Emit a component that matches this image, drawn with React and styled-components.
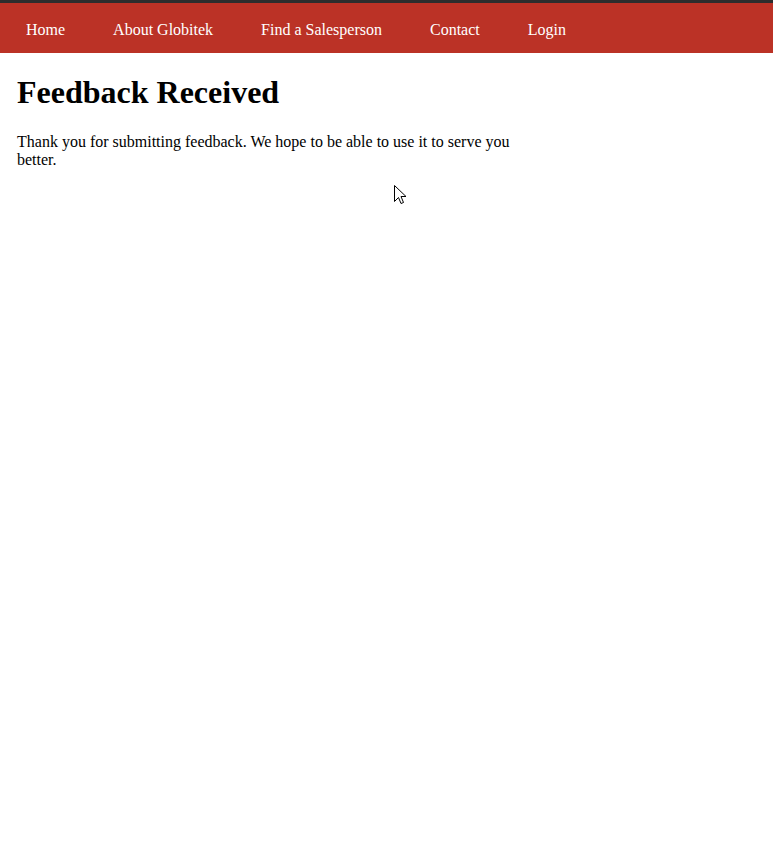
import React from "react";
import styled, { createGlobalStyle } from "styled-components";

const Global = createGlobalStyle`
  html, body { margin: 0; padding: 0; background: #ffffff; }
  body { font-family: "Liberation Serif", "Times New Roman", serif; font-size: 16px; color: #000; }
`;

const Page = styled.div`
  position: relative;
  min-height: 857px;
`;

const TopBar = styled.div`
  height: 3px;
  background: #2d2d2d;
`;

const Nav = styled.nav`
  background: #bb3226;
`;

const NavList = styled.ul`
  display: flex;
  margin: 0;
  padding: 0 0 0 2px;
  list-style: none;
`;

const NavItem = styled.li`
  display: block;
`;

const NavLink = styled.a`
  display: block;
  padding: 18px 24px 14px;
  color: #ffffff;
  text-decoration: none;
  font-size: 16px;
  line-height: 18px;
  white-space: nowrap;
`;

const Main = styled.main`
  padding: 0 17px;
  max-width: 510px;
`;

const Title = styled.h1`
  font-size: 32px;
  font-weight: bold;
  margin: 21.44px 0;
`;

const Text = styled.p`
  margin: 16px 0;
  font-size: 16px;
`;

const Cursor = styled.svg`
  position: absolute;
  left: 394px;
  top: 185px;
  pointer-events: none;
`;

const links = ["Home", "About Globitek", "Find a Salesperson", "Contact", "Login"];

export default function App() {
  return (
    <Page>
      <Global />
      <TopBar />
      <Nav>
        <NavList>
          {links.map((l) => (
            <NavItem key={l}>
              <NavLink href="#">{l}</NavLink>
            </NavItem>
          ))}
        </NavList>
      </Nav>
      <Main>
        <Title>Feedback Received</Title>
        <Text>
          Thank you for submitting feedback. We hope to be able to use it to serve you better.
        </Text>
      </Main>
      <Cursor width="13" height="20" viewBox="0 0 13 20">
        <path
          d="M0.5 0.5 L0.5 16.5 L4.5 12.5 L7 18.5 L9.5 17.5 L7 11.5 L12 11.5 Z"
          fill="#fff"
          stroke="#000"
          strokeWidth="1"
          strokeLinejoin="miter"
        />
      </Cursor>
    </Page>
  );
}
